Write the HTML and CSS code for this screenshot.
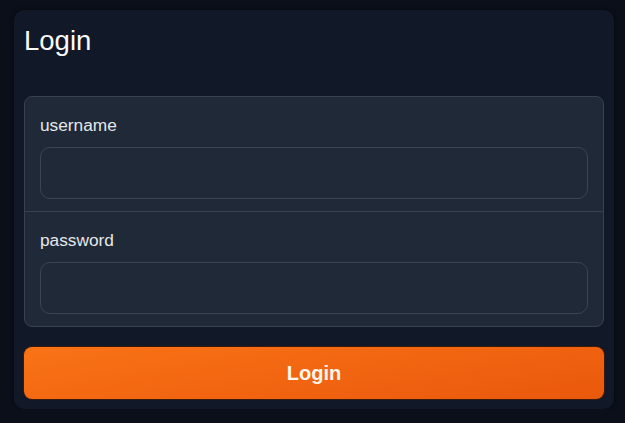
FILE: index.html
```html
<!DOCTYPE html>
<html lang="en">
<head>
    <meta charset="UTF-8">
    <meta name="viewport" content="width=device-width, initial-scale=1.0">
    <title>Login</title>
    <link rel="stylesheet" href="styles.css">
</head>
<body>
    <div class="card">
        <h1>Login</h1>

        <form class="login-form" onsubmit="return false">
            <div class="fields">
                <div class="field">
                    <label for="username">username</label>
                    <input id="username" type="text">
                </div>
                <div class="field">
                    <label for="password">password</label>
                    <input id="password" type="password">
                </div>
            </div>

            <button type="submit">Login</button>
        </form>
    </div>
</body>
</html>
```

FILE: styles.css
```css
body {
    margin: 0;
    padding: 10px 11px 0 14px;
    background: #0b0f1a;
    font-family: 'Liberation Sans', Arial, sans-serif;
    color: #e5e7eb;
}
.card {
    width: 580px;
    background: #111827;
    border-radius: 10px;
    padding: 15px 10px 10px;
    box-shadow: 0 0 4px rgba(0, 0, 0, 0.5);
}
h1 {
    margin: 0 0 39px;
    font-size: 27.5px;
    font-weight: normal;
    line-height: 32px;
    color: #f9fafb;
}
.fields {
    background: #1f2937;
    border: 1px solid #374151;
    border-radius: 8px;
}
.field {
    padding: 16px 15px 12px;
    display: flex;
    flex-direction: column;
}
.field + .field {
    border-top: 1px solid #374151;
}
label {
    font-size: 17.3px;
    line-height: 24px;
    margin-bottom: 10px;
    color: #e5e7eb;
}
input {
    box-sizing: border-box;
    height: 52px;
    width: 100%;
    background: #1f2937;
    border: 1px solid #3b4556;
    border-radius: 10px;
    color: #f3f4f6;
    font-size: 16px;
    padding: 0 14px;
    outline: none;
}
button {
    display: block;
    width: 100%;
    height: 52px;
    margin-top: 20px;
    border: none;
    border-radius: 8px;
    background: linear-gradient(170deg, #f97316, #ea580c);
    box-shadow: 0 0 0 1px #3a1a0c;
    color: #fff7ed;
    font-family: 'Liberation Sans', Arial, sans-serif;
    font-size: 20px;
    font-weight: bold;
    cursor: pointer;
}
```
